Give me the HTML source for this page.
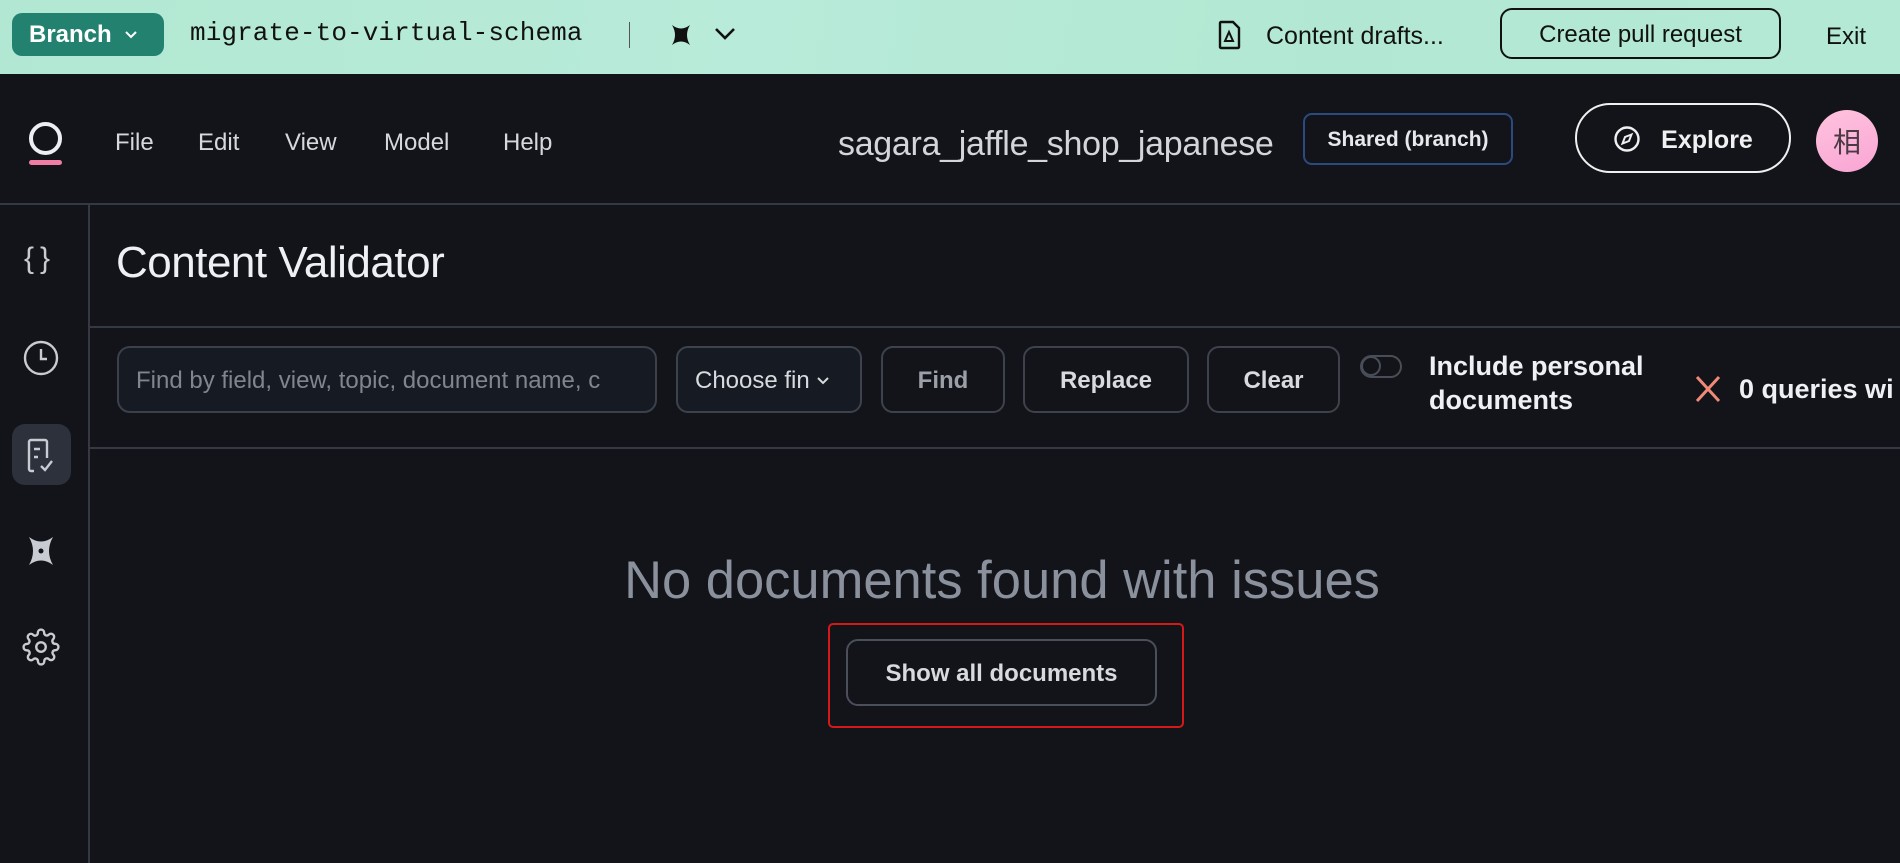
<!DOCTYPE html>
<html><head><meta charset="utf-8"><style>
*{margin:0;padding:0;box-sizing:border-box}
body{width:1900px;height:863px;overflow:hidden;background:#121419;font-family:"Liberation Sans","Noto Sans CJK JP",sans-serif;position:relative;color:#e6e8ec}
.a{position:absolute}
.top{left:0;top:0;width:1900px;height:74px;background:linear-gradient(100deg,#b2e8d3 0%,#b8ebd9 40%,#b2e8d3 70%,#b4e9d6 100%)}
.menu{font-size:24px;color:#d6d8de;top:129px}
.btn{border:2px solid #3d424d;border-radius:12px;display:flex;align-items:center;justify-content:center;font-size:24px;font-weight:bold;color:#d8dade}
</style></head><body>
<div class="a top"></div>
<div class="a" style="left:12px;top:13px;width:152px;height:43px;background:#23826f;border-radius:10px;color:#fff;font-size:24px;font-weight:bold;display:flex;align-items:center;padding-left:17px">Branch
<svg width="14" height="10" style="margin-left:12px" viewBox="0 0 14 10"><path d="M2 2l5 5 5-5" stroke="#fff" stroke-width="2" fill="none"/></svg></div>
<div class="a" style="left:190px;top:18px;font-family:'Liberation Mono',monospace;font-size:26px;letter-spacing:0.1px;color:#111">migrate-to-virtual-schema</div>
<div class="a" style="left:629px;top:22px;width:1px;height:26px;background:#555"></div>
<svg class="a" style="left:668px;top:22px" width="26" height="26" viewBox="0 0 26 26"><path d="M4 3 Q13 10 22 3 Q16 13 22 23 Q13 16 4 23 Q10 13 4 3Z" fill="#111"/></svg>
<svg class="a" style="left:714px;top:27px" width="22" height="14" viewBox="0 0 22 14"><path d="M2 2l9 9 9-9" stroke="#111" stroke-width="2.6" fill="none"/></svg>
<svg class="a" style="left:1218px;top:20px" width="24" height="30" viewBox="0 0 24 30"><path d="M3 2h12l6 6v19a1 1 0 0 1-1 1H3a1 1 0 0 1-1-1V3a1 1 0 0 1 1-1z" stroke="#111" stroke-width="2.4" fill="none"/><path d="M11 12l-4 9h8z" stroke="#111" stroke-width="2" fill="none"/></svg>
<div class="a" style="left:1266px;top:22px;font-size:25px;color:#111">Content drafts...</div>
<div class="a" style="left:1500px;top:8px;width:281px;height:51px;border:2px solid #111;border-radius:12px;font-size:24px;color:#111;display:flex;align-items:center;justify-content:center;padding-top:3px">Create pull request</div>
<div class="a" style="left:1826px;top:23px;font-size:24px;color:#111">Exit</div>

<div class="a" style="left:29px;top:122px;width:33px;height:33px;border:4px solid #eceef2;border-radius:50%"></div>
<div class="a" style="left:29px;top:160px;width:33px;height:5px;background:#f07ea4;border-radius:3px"></div>
<div class="a menu" style="left:115px">File</div>
<div class="a menu" style="left:198px">Edit</div>
<div class="a menu" style="left:285px">View</div>
<div class="a menu" style="left:384px">Model</div>
<div class="a menu" style="left:503px">Help</div>
<div class="a" style="left:838px;top:125px;font-size:34px;color:#d2d5db;letter-spacing:-0.3px">sagara_jaffle_shop_japanese</div>
<div class="a" style="left:1303px;top:113px;width:210px;height:52px;border:2px solid #2a4a80;border-radius:9px;display:flex;align-items:center;justify-content:center;font-size:21px;font-weight:bold;color:#e6e8ec;padding-top:2px">Shared (branch)</div>
<div class="a" style="left:1575px;top:103px;width:216px;height:70px;border:2px solid #f0f0f0;border-radius:36px;display:flex;align-items:center;justify-content:center;font-size:25px;font-weight:bold;color:#f0f0f0;padding-top:5px">
<svg width="28" height="28" viewBox="0 0 28 28" style="margin-right:20px;margin-top:-4px"><circle cx="14" cy="14" r="11.5" stroke="#f0f0f0" stroke-width="2.4" fill="none"/><path d="M18.5 9.5 L12 12 L9.5 18.5 L16 16Z" stroke="#f0f0f0" stroke-width="2" fill="none"/></svg>Explore</div>
<div class="a" style="left:1816px;top:110px;width:62px;height:62px;border-radius:50%;background:linear-gradient(160deg,#ffc3de,#f9a5d4);display:flex;align-items:center;justify-content:center;font-size:28px;color:#4a3a44">相</div>
<div class="a" style="left:0;top:203px;width:1900px;height:2px;background:#353943"></div>

<div class="a" style="left:88px;top:205px;width:2px;height:658px;background:#353943"></div>
<div class="a" style="left:24px;top:242px;font-size:30px;color:#c8cbd2;letter-spacing:6px">{}</div>
<svg class="a" style="left:22px;top:339px" width="38" height="38" viewBox="0 0 38 38"><circle cx="19" cy="19" r="16" stroke="#c8cbd2" stroke-width="2.4" fill="none"/><path d="M19 10v10h6" stroke="#c8cbd2" stroke-width="2.4" fill="none"/></svg>
<div class="a" style="left:12px;top:424px;width:59px;height:61px;background:#2c313b;border-radius:13px"></div>
<svg class="a" style="left:24px;top:437px" width="36" height="38" viewBox="0 0 36 38"><path d="M10 34H7a2 2 0 0 1-2-2V5a2 2 0 0 1 2-2h14a2 2 0 0 1 2 2v16" stroke="#c8cbd2" stroke-width="2.4" fill="none"/><path d="M10 12h6M10 20h4" stroke="#c8cbd2" stroke-width="2.4"/><path d="M17 29l4 4 7-9" stroke="#c8cbd2" stroke-width="2.4" fill="none"/></svg>
<svg class="a" style="left:26px;top:535px" width="30" height="32" viewBox="0 0 30 32"><path d="M3 2 Q15 11 27 2 Q19 16 27 30 Q15 21 3 30 Q11 16 3 2Z" fill="#c8cbd2"/><circle cx="15" cy="16" r="2.5" fill="#121419"/></svg>
<svg class="a" style="left:22px;top:627px" width="38" height="40" viewBox="0 0 24 24"><path d="M12 15a3 3 0 1 0 0-6 3 3 0 0 0 0 6z" stroke="#c8cbd2" stroke-width="1.5" fill="none"/><path d="M19.4 15a1.65 1.65 0 0 0 .33 1.820l.06.06a2 2 0 1 1-2.83 2.83l-.06-.06a1.65 1.65 0 0 0-1.82-.33 1.65 1.650 0 0 0-1 1.51V21a2 2 0 1 1-4 0v-.09A1.65 1.65 0 0 0 9 19.4a1.65 1.65 0 0 0-1.82.33l-.06.06a2 2 0 1 1-2.830-2.83l.06-.06a1.65 1.65 0 0 0 .33-1.82 1.65 1.65 0 0 0-1.51-1H3a2 2 0 1 1 0-4h.09A1.65 1.65 0 0 0 4.6 9a1.65 1.65 0 0 0-.33-1.82l-.06-.06a2 2 0 1 1 2.83-2.83l.06.06a1.65 1.65 0 0 0 1.82.33H9a1.65 1.65 0 0 0 1-1.51V3a2 2 0 1 1 4 0v.09a1.65 1.65 0 0 0 1 1.51 1.65 1.65 0 0 0 1.82-.33l.06-.06a2 2 0 1 1 2.83 2.83l-.06.06a1.65 1.65 0 0 0-.33 1.82V9a1.65 1.65 0 0 0 1.51 1H21a2 2 0 1 1 0 4h-.09a1.65 1.65 0 0 0-1.51 1z" stroke="#c8cbd2" stroke-width="1.5" fill="none"/></svg>

<div class="a" style="left:116px;top:238px;font-size:44px;color:#eef0f3;letter-spacing:-0.5px">Content Validator</div>
<div class="a" style="left:90px;top:326px;width:1810px;height:2px;background:#353943"></div>
<div class="a" style="left:117px;top:346px;width:540px;height:67px;border:2px solid #3b404b;border-radius:13px;background:#161a22;font-size:24px;color:#80858f;display:flex;align-items:center;padding-left:17px;padding-top:3px;white-space:nowrap;overflow:hidden">Find by field, view, topic, document name, c</div>
<div class="a btn" style="left:676px;top:346px;width:186px;height:67px;background:#161a22;font-weight:normal;justify-content:flex-start;padding-left:17px;padding-top:3px">Choose fin<svg width="14" height="10" style="margin-left:6px" viewBox="0 0 14 10"><path d="M2 2l5 5 5-5" stroke="#d8dade" stroke-width="2" fill="none"/></svg></div>
<div class="a btn" style="left:881px;top:346px;width:124px;height:67px;color:#9a9fa8;padding-top:3px">Find</div>
<div class="a btn" style="left:1023px;top:346px;width:166px;height:67px;padding-top:3px">Replace</div>
<div class="a btn" style="left:1207px;top:346px;width:133px;height:67px;padding-top:3px">Clear</div>
<div class="a" style="left:1360px;top:355px;width:42px;height:23px;border:2.5px solid #484d58;border-radius:12px"><div style="position:absolute;left:-1px;top:-1px;width:20px;height:20px;border:2.5px solid #484d58;border-radius:50%"></div></div>
<div class="a" style="left:1429px;top:349px;font-size:27px;font-weight:bold;line-height:34px;color:#eef0f3">Include personal<br>documents</div>
<svg class="a" style="left:1694px;top:374px" width="28" height="30" viewBox="0 0 28 30"><path d="M3 3l22 24M25 3L3 27" stroke="#f08a76" stroke-width="3"/></svg>
<div class="a" style="left:1739px;top:374px;font-size:27px;font-weight:bold;color:#eef0f3;white-space:nowrap">0 queries wi</div>
<div class="a" style="left:90px;top:447px;width:1810px;height:2px;background:#353943"></div>

<div class="a" style="left:560px;top:550px;width:884px;text-align:center;font-size:52.5px;color:#8a909c">No documents found with issues</div>
<div class="a" style="left:828px;top:623px;width:356px;height:105px;border:2px solid #d51818;border-radius:5px"></div>
<div class="a btn" style="left:846px;top:639px;width:311px;height:67px;border-color:#4a4f5a;font-size:24px;padding-top:3px">Show all documents</div>
</body></html>
